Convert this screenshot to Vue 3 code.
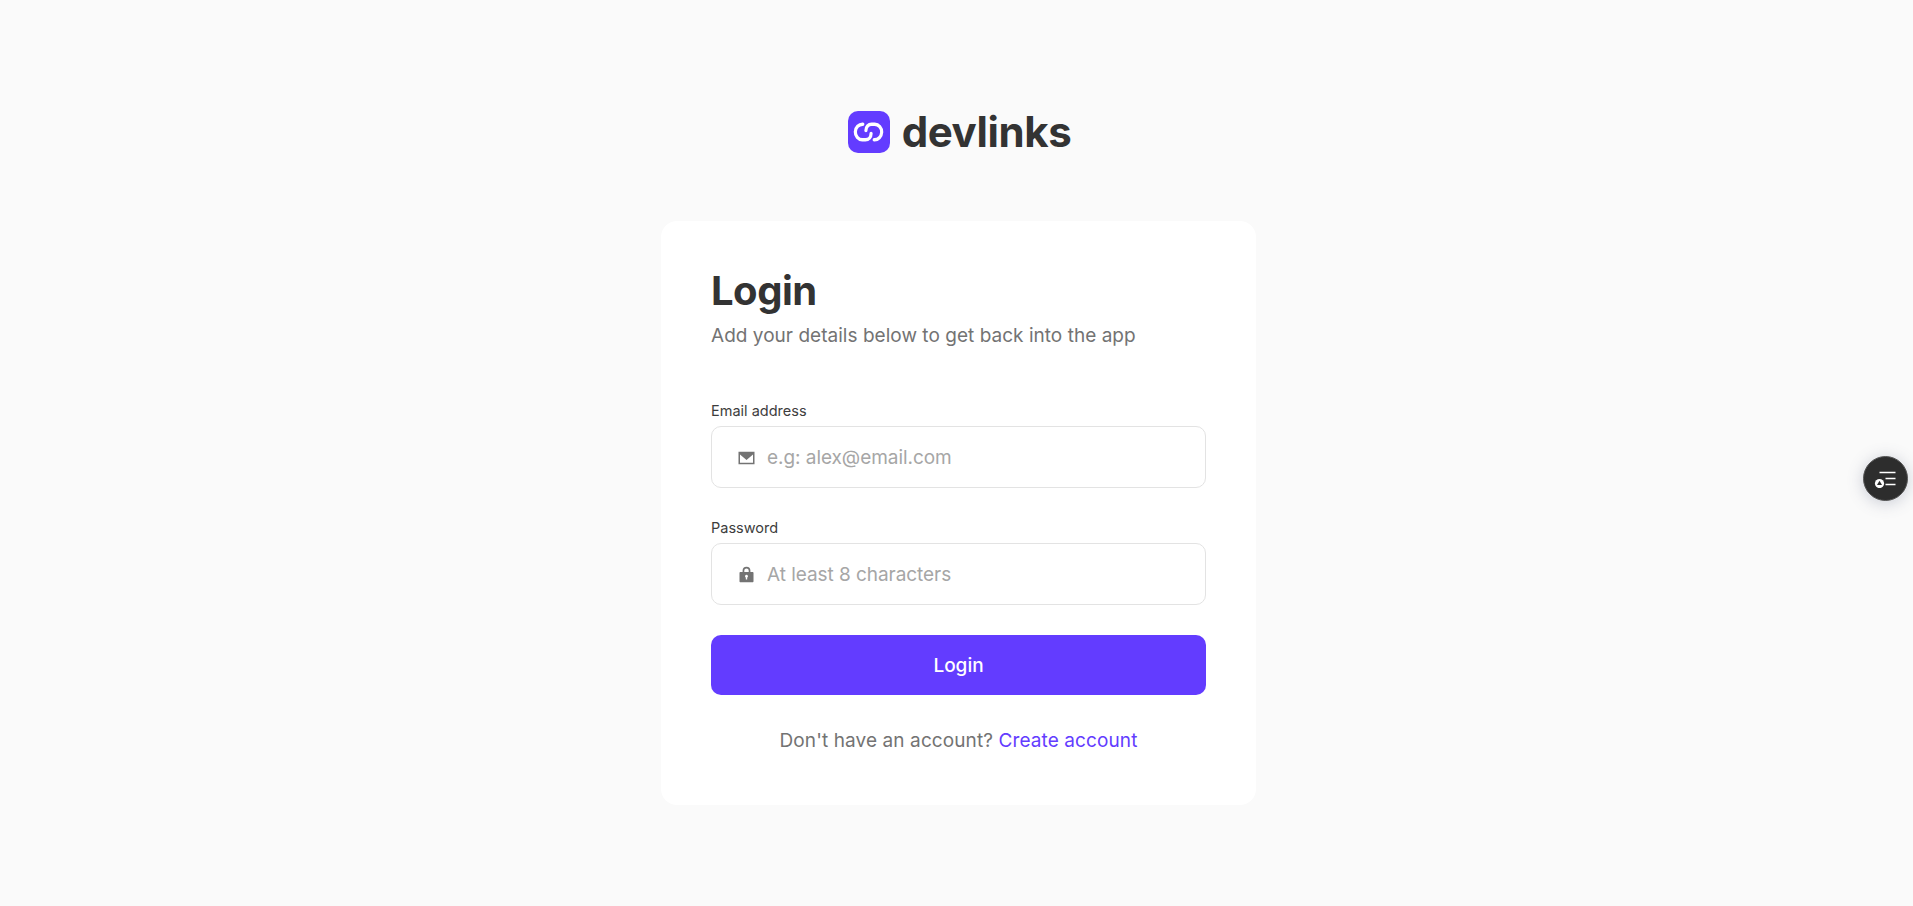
<template>
  <div class="page">
    <div class="logo">
      <span class="logo-mark">
        <svg width="31" height="20" viewBox="0 0 30 18" preserveAspectRatio="none" fill="none" stroke="#fff" stroke-width="3.1" stroke-linecap="round">
          <path d="M9.5 2 A7 7 0 1 0 9 16 h3 c3.2 0 5.5-2.4 5.5-5.6" />
          <path d="M20.5 16 A7 7 0 1 0 21 2 h-3 c-3.2 0-5.5 2.4-5.5 5.6" />
        </svg>
      </span>
      <span class="logo-text">devlinks</span>
    </div>

    <form class="card" @submit.prevent>
      <h1 class="title">Login</h1>
      <p class="subtitle">Add your details below to get back into the app</p>

      <div class="fields">
        <div class="field">
          <label class="field-label" for="email">Email address</label>
          <div class="input-box">
            <svg class="input-icon mail" width="17" height="14" viewBox="0 0 17 14">
              <path fill="#737373" fill-rule="evenodd" d="M0.5 0.8h16v12.4h-16z M2 3.6v8.1h13v-8.1l-6.5 5.4z" />
            </svg>
            <input id="email" type="email" placeholder="e.g: alex@email.com" />
          </div>
        </div>
        <div class="field">
          <label class="field-label" for="password">Password</label>
          <div class="input-box">
            <svg class="input-icon" width="17" height="17" viewBox="0 0 17 17">
              <path fill="#737373" fill-rule="evenodd" d="M4.6 6V4.6a3.9 3.9 0 0 1 7.8 0V6h2.1c.6 0 1 .4 1 1v8.2c0 .6-.4 1-1 1h-12c-.6 0-1-.4-1-1V7c0-.6.4-1 1-1z M6.3 6h4.4V4.6a2.2 2.2 0 0 0-4.4 0z M8.5 8.8a1.5 1.5 0 0 0-.7 2.8v1.8h1.4v-1.8a1.5 1.5 0 0 0-.7-2.8z" />
            </svg>
            <input id="password" type="password" placeholder="At least 8 characters" />
          </div>
        </div>
      </div>

      <button class="submit" type="submit">Login</button>
      <p class="switch">Don't have an account? <a href="#">Create account</a></p>
    </form>

    <button class="float-btn" type="button" aria-label="Open panel">
      <svg width="24" height="18" viewBox="0 0 24 18" fill="none" stroke="#fff" stroke-width="1.4">
        <path d="M5.5 2.5h16M11.5 8.5h10M11.5 14.5h10" />
        <circle cx="5.5" cy="13.5" r="4.6" fill="#fff" stroke="none" />
        <path d="M5.5 10.8l2.5 4.2h-5z" fill="#2d2d2d" stroke="none" />
      </svg>
    </button>
  </div>
</template>

<script setup>
</script>

<style>
html, body { margin: 0; background: #fafafa; }
</style>

<style scoped>
.page { position: relative; box-sizing: border-box; height: 906px; padding: 111px 0 0 4px; display: flex; flex-direction: column; align-items: center; background: #fafafa; font-family: Inter, "Liberation Sans", sans-serif; overflow: hidden; }
.logo { display: flex; align-items: center; gap: 12px; height: 42px; margin: 0 0 68px 2px; }
.logo-mark { width: 42px; height: 42px; border-radius: 10px; background: #633cff; display: flex; align-items: center; justify-content: center; }
.logo-text { font-size: 42px; font-weight: 700; color: #333; letter-spacing: -0.4px; line-height: 42px; }
.card { box-sizing: border-box; width: 595px; height: 584px; padding: 41px 50px; background: #fff; border-radius: 16px; }
.title { margin: 0; font-size: 40px; font-weight: 700; line-height: 58px; color: #333; letter-spacing: -0.5px; }
.subtitle { margin: 2px 0 0; font-size: 19px; line-height: 28px; color: #737373; letter-spacing: 0.03px; }
.fields { margin-top: 51px; display: flex; flex-direction: column; gap: 30px; }
.field-label { display: block; font-size: 14.5px; line-height: 20px; color: #3d3d3d; margin-bottom: 5px; }
.input-box { box-sizing: border-box; height: 62px; display: flex; align-items: center; gap: 12px; padding: 0 26px; border: 1px solid #e3e3e3; border-radius: 10px; }
.input-icon { flex: none; }
.input-icon.mail { margin-top: 2px; }
.input-box input { flex: 1; min-width: 0; border: 0; outline: 0; padding: 0; background: transparent; font: inherit; font-size: 19px; color: #333; letter-spacing: -0.05px; }
.input-box input::placeholder { color: #a6a6a6; opacity: 1; }
.submit { display: block; width: 100%; height: 60px; margin-top: 30px; border: 0; border-radius: 10px; background: #633cff; color: #fff; font: inherit; font-size: 19px; font-weight: 500; }
.switch { margin: 33px 0 0; text-align: center; font-size: 19px; line-height: 26px; color: #737373; letter-spacing: 0.1px; }
.switch a { color: #633cff; text-decoration: none; }
.float-btn { position: absolute; left: 1863px; top: 456px; width: 45px; height: 45px; padding: 0; display: flex; align-items: center; justify-content: center; background: #2d2d2d; border: 1px solid #555; border-radius: 50%; box-shadow: 0 2px 16px rgba(90, 100, 130, 0.3); }
</style>
